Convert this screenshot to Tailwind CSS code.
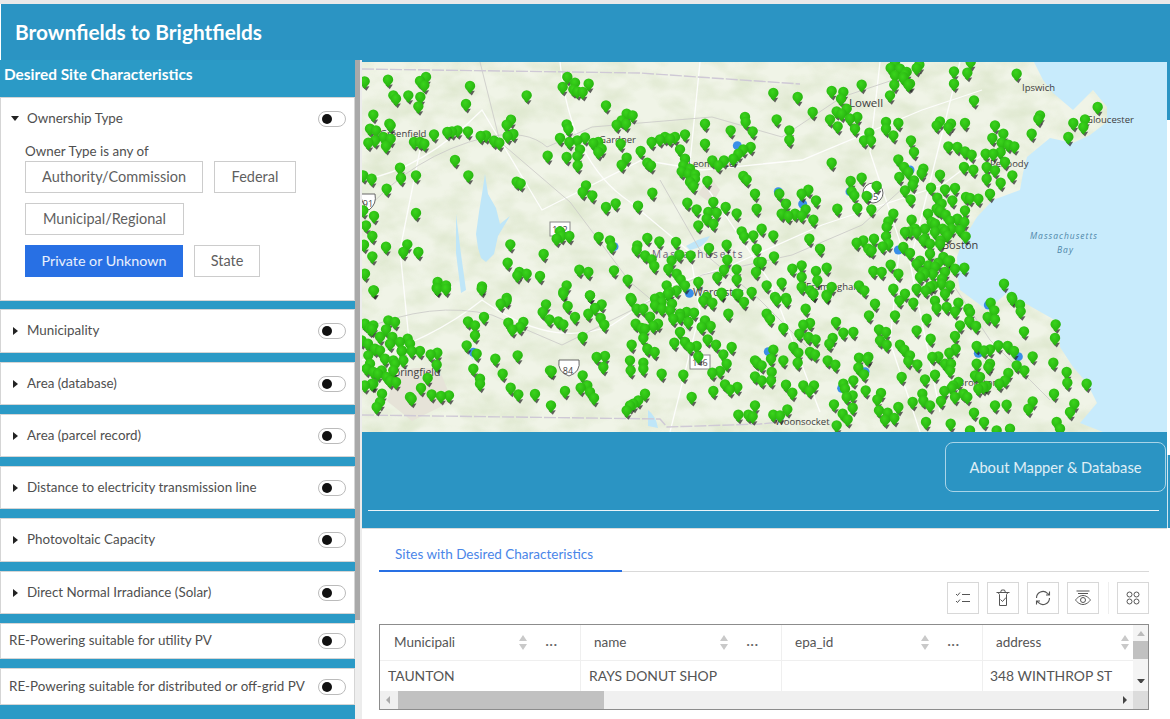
<!doctype html>
<html lang="en">
  <head>
    <meta charset="UTF-8" />
    <title>Brownfields to Brightfields</title>
    <script src="https://cdn.jsdelivr.net/npm/@tailwindcss/browser@4"></script>
  </head>
  <body class="w-[1170px] h-[719px] overflow-hidden bg-white font-['Lato','Liberation_Sans',sans-serif] text-[#4f4f4f]">
    <div class="h-[4px] bg-[#e9e9e9]"></div>

    <!-- header -->
    <header class="h-[56px] ml-[1px] bg-[#2b94c3] flex items-center pl-[14px]">
      <h1 class="text-white text-[20.8px] font-bold">Brownfields to Brightfields</h1>
    </header>

    <div class="flex h-[659px]">
      <!-- filters -->
      <aside class="w-[355px] shrink-0 bg-[#2b9ac6] flex flex-col">
        <h2 class="h-[37px] pl-[4px] pt-[3px] text-white text-[15.4px] font-bold">Desired Site Characteristics</h2>
        <section class="h-[204px] bg-white border border-[#d5d5d5] pl-[10px] pr-[8px]">
          <div class="flex items-center h-[41px]">
            <svg class="w-[8px] h-[5px] mr-[8px]" viewBox="0 0 8 5"><path d="M0 0h8L4 5z" fill="#222" /></svg>
            <span class="text-[13.4px] flex-1 pb-[1px]">Ownership Type</span>
            <div class="w-[28px] h-[16px] rounded-full border border-[#bbb] bg-white flex items-center pl-[3px]"><div class="w-[10px] h-[10px] rounded-full bg-[#111]"></div></div>
          </div>
          <p class="ml-[14px] mt-[5px] h-[15px] text-[13.4px] leading-[15px]">Owner Type is any of</p>
          <div class="ml-[14px] mt-[2px] flex flex-col gap-[10px]">
            <div class="flex gap-[11px]">
              <button class="w-[178px] h-[32px] border border-[#ccc] text-[14.5px] text-[#5f5f5f]">Authority/Commission</button>
              <button class="w-[82px] h-[32px] border border-[#ccc] text-[14.5px] text-[#5f5f5f]">Federal</button>
            </div>
            <div class="flex">
              <button class="w-[159px] h-[32px] border border-[#ccc] text-[14.5px] text-[#5f5f5f]">Municipal/Regional</button>
            </div>
            <div class="flex gap-[11px]">
              <button class="w-[158px] h-[32px] bg-[#2870e4] text-[14.3px] text-white/90">Private or Unknown</button>
              <button class="w-[66px] h-[32px] border border-[#ccc] text-[14.5px] text-[#5f5f5f]">State</button>
            </div>
          </div>
        </section>

        <div class="flex flex-col gap-[9px] mt-[8px]">
          <div class="h-[44px] bg-white border border-[#d5d5d5] flex items-center pl-[12px] pr-[8px]">
            <svg class="w-[5px] h-[8px] mr-[9px]" viewBox="0 0 5 8"><path d="M0 0l5 4-5 4z" fill="#222" /></svg>
            <span class="text-[13.4px] flex-1 pb-[1px]">Municipality</span>
            <div class="w-[28px] h-[16px] rounded-full border border-[#bbb] bg-white flex items-center pl-[3px]"><div class="w-[10px] h-[10px] rounded-full bg-[#111]"></div></div>
          </div>
          <div class="h-[43px] bg-white border border-[#d5d5d5] flex items-center pl-[12px] pr-[8px]">
            <svg class="w-[5px] h-[8px] mr-[9px]" viewBox="0 0 5 8"><path d="M0 0l5 4-5 4z" fill="#222" /></svg>
            <span class="text-[13.4px] flex-1 pb-[1px]">Area (database)</span>
            <div class="w-[28px] h-[16px] rounded-full border border-[#bbb] bg-white flex items-center pl-[3px]"><div class="w-[10px] h-[10px] rounded-full bg-[#111]"></div></div>
          </div>
          <div class="h-[43px] bg-white border border-[#d5d5d5] flex items-center pl-[12px] pr-[8px]">
            <svg class="w-[5px] h-[8px] mr-[9px]" viewBox="0 0 5 8"><path d="M0 0l5 4-5 4z" fill="#222" /></svg>
            <span class="text-[13.4px] flex-1 pb-[1px]">Area (parcel record)</span>
            <div class="w-[28px] h-[16px] rounded-full border border-[#bbb] bg-white flex items-center pl-[3px]"><div class="w-[10px] h-[10px] rounded-full bg-[#111]"></div></div>
          </div>
          <div class="h-[43px] bg-white border border-[#d5d5d5] flex items-center pl-[12px] pr-[8px]">
            <svg class="w-[5px] h-[8px] mr-[9px]" viewBox="0 0 5 8"><path d="M0 0l5 4-5 4z" fill="#222" /></svg>
            <span class="text-[13.4px] flex-1 pb-[1px]">Distance to electricity transmission line</span>
            <div class="w-[28px] h-[16px] rounded-full border border-[#bbb] bg-white flex items-center pl-[3px]"><div class="w-[10px] h-[10px] rounded-full bg-[#111]"></div></div>
          </div>
          <div class="h-[44px] bg-white border border-[#d5d5d5] flex items-center pl-[12px] pr-[8px]">
            <svg class="w-[5px] h-[8px] mr-[9px]" viewBox="0 0 5 8"><path d="M0 0l5 4-5 4z" fill="#222" /></svg>
            <span class="text-[13.4px] flex-1 pb-[1px]">Photovoltaic Capacity</span>
            <div class="w-[28px] h-[16px] rounded-full border border-[#bbb] bg-white flex items-center pl-[3px]"><div class="w-[10px] h-[10px] rounded-full bg-[#111]"></div></div>
          </div>
          <div class="h-[43px] bg-white border border-[#d5d5d5] flex items-center pl-[12px] pr-[8px]">
            <svg class="w-[5px] h-[8px] mr-[9px]" viewBox="0 0 5 8"><path d="M0 0l5 4-5 4z" fill="#222" /></svg>
            <span class="text-[13.4px] flex-1 pb-[1px]">Direct Normal Irradiance (Solar)</span>
            <div class="w-[28px] h-[16px] rounded-full border border-[#bbb] bg-white flex items-center pl-[3px]"><div class="w-[10px] h-[10px] rounded-full bg-[#111]"></div></div>
          </div>
          <div class="h-[36px] bg-white border border-[#d5d5d5] flex items-center pl-[8px] pr-[8px]">
            <span class="text-[13.4px] flex-1 pb-[1px]">RE-Powering suitable for utility PV</span>
            <div class="w-[28px] h-[16px] rounded-full border border-[#bbb] bg-white flex items-center pl-[3px]"><div class="w-[10px] h-[10px] rounded-full bg-[#111]"></div></div>
          </div>
          <div class="h-[37px] bg-white border border-[#d5d5d5] flex items-center pl-[8px] pr-[8px]">
            <span class="text-[13.4px] flex-1 pb-[1px]">RE-Powering suitable for distributed or off-grid PV</span>
            <div class="w-[28px] h-[16px] rounded-full border border-[#bbb] bg-white flex items-center pl-[3px]"><div class="w-[10px] h-[10px] rounded-full bg-[#111]"></div></div>
          </div>
        </div>
      </aside>

      <!-- sidebar scrollbar -->
      <div class="w-[5px] shrink-0 bg-[#eeeeee]"><div class="h-[560px] bg-[#a9a9a9]"></div></div>
      <div class="w-[2px] shrink-0 bg-[#ececec]"></div>

      <main class="w-[805px] shrink-0 flex flex-col">
        <div class="h-[2px] bg-[#2b94c3]"></div>
        <!-- map -->
        <svg id="map" class="block w-[805px] h-[370px]" viewBox="362 62 805 370">
          <defs>
            <radialGradient id="head" cx="0.42" cy="0.3" r="0.75">
              <stop offset="0" stop-color="#3ad41c" />
              <stop offset="1" stop-color="#22ab0c" />
            </radialGradient>
            <filter id="hills" x="0" y="0" width="1" height="1">
              <feTurbulence type="fractalNoise" baseFrequency="0.03 0.05" numOctaves="3" seed="7" />
              <feColorMatrix values="0 0 0 0 0.70  0 0 0 0 0.78  0 0 0 0 0.58  2.2 0 0 0 -0.8" />
            </filter>
            <g id="pin">
              <path d="M-2.500 4 1.800 8.200 4.800 3.500z" fill="#222" opacity="0.7" />
              <path d="M-5.200-1.300a5.200 5.200 0 0 1 10.400 0c0 3-3.200 4.700-5.200 7.700-2-3-5.200-4.700-5.200-7.700z" fill="url(#head)" />
            </g>
          </defs>
          <rect x="362" y="62" width="805" height="370" fill="#f0f4e7" />
          <rect x="362" y="62" width="805" height="370" filter="url(#hills)" opacity="0.7" />
          <path d="M395 375q20-12 45-4l12 30-40 20-25-20zM710 176l10 14-8 14-14-10z" fill="#e6e3d8" />
          <!-- water -->
          <path d="M1033 60 1043 80 1053 93 1073 110 1093 90 1107 107 1107 122 1090 135 1073 143 1050 138 1027 157 1023 173 1020 190 993 200 977 217 963 240 957 257 957 273 960 290 987 310 1007 293 1037 310 1060 323 1060 347 1073 367 1087 383 1097 403 1080 423 1103 432 1167 432 1167 60z" fill="#c8ebfc" />
          <g fill="#bfe6f8">
            <path d="M485 174l3 20 8 14 4 16 10-8-12 20-4 18-8 8-5-4-3-10-2-14 3-22 3-18z" />
            <path d="M456 214l5 40 5 36-5 3-5-40z" />
            <path d="M686 246q14-8 24-10-6 12-20 14zM648 410q8 6 10 18l-10-2zM470 350l6 6-4 4z" />
          </g>
          <!-- roads -->
          <g fill="none" stroke="#ffffff" stroke-width="1.300" opacity="0.9">
            <path d="M362 180q60-10 120-70l60 100 100-50 60 10 100-10 120-50 60-20" />
            <path d="M362 360q70-20 120-60 70 50 130 25l60-40 60-20 90-40 120-40 40-30" />
            <path d="M560 62q10 100 70 140l60 50 10 60-30 120" />
            <path d="M700 62l-10 100 40 60 40 60 50 130" />
            <path d="M880 62l-10 90 30 90-10 100 30 90" />
            <path d="M420 150l-20 100 10 100" />
            <path d="M960 62l-30 120-20 80 30 150" />
          </g>
          <g fill="none" stroke="#cdcdc9" stroke-width="0.900">
            <path d="M362 215q50-60 125-78 40-8 60 10l45-20 120-10 70 20 60-40 60-20" />
            <path d="M362 330q70-30 130-15l70 30 40-20 100-50 90-20 70-30 50-45" />
            <path d="M930 250l60 90 60 60" />
            <path d="M480 62l20 80 70 60 60 80 60 50" />
            <path d="M660 180l40 70 60 50 60 60" />
          </g>
          <g fill="none" stroke="#cfc9d6" stroke-width="1.400" stroke-dasharray="12 2">
            <path d="M362 69 640 73 800 84" />
            <path d="M362 415 660 419 667 427 760 424 780 422" />
          </g>
          <!-- shields -->
          <g font-family="'Open Sans',sans-serif" font-size="9" fill="#444" text-anchor="middle">
            <path d="M361 194h14q2 10-6 16q-8-6-8-16z" fill="#fff" stroke="#666" /><text x="368" y="207">91</text>
            <rect x="550" y="222" width="20" height="14" fill="#fff" stroke="#888" /><text x="560" y="233">122</text>
            <circle cx="873" cy="193" r="10" fill="#fff" stroke="#666" /><text x="873" y="200">95</text>
            <path d="M559 360h20q2 12-10 16q-12-4-10-16z" fill="#fff" stroke="#666" /><text x="568" y="374">84</text>
            <rect x="690" y="355" width="20" height="14" fill="#fff" stroke="#888" /><text x="700" y="366">146</text>
          </g>
          <!-- place labels -->
          <g font-family="'Open Sans',sans-serif" fill="#3d3d3d">
            <text x="380" y="137" font-size="9.500">Greenfield</text>
            <text x="599" y="143" font-size="9.500">Gardner</text>
            <text x="688" y="167" font-size="9.500">Leominster</text>
            <text x="849" y="107" font-size="11.500">Lowell</text>
            <text x="1022" y="91" font-size="9.500">Ipswich</text>
            <text x="1086" y="123" font-size="9.500">Gloucester</text>
            <text x="990" y="167" font-size="9.500">Peabody</text>
            <text x="942" y="249" font-size="11">Boston</text>
            <text x="806" y="290" font-size="9.500">Framingham</text>
            <text x="693" y="296" font-size="10.500">Worcester</text>
            <text x="388" y="376" font-size="10.500">Springfield</text>
            <text x="775" y="425" font-size="9.500">Woonsocket</text>
            <text x="958" y="386" font-size="9.500">Brockton</text>
            <text x="652" y="258" font-size="10" letter-spacing="1.800" fill="#6b5d78">Massachusetts</text>
            <text x="1030" y="239" font-size="8.500" letter-spacing="1" font-style="italic" fill="#4d86a8">Massachusetts</text>
            <text x="1057" y="253" font-size="8.500" letter-spacing="1" font-style="italic" fill="#4d86a8">Bay</text>
          </g>
          <g id="pins"></g>
        </svg>

        <!-- about band -->
        <div class="h-[97px] bg-[#2b94c3] pt-[10px] pl-[583px] border-b border-[#dcdcdc]">
          <button class="w-[221px] h-[50px] rounded-[8px] border border-[#a8d4e8] text-[14.7px] text-white/85">About Mapper &amp; Database</button>
          <div class="mt-[18px] -ml-[577px] mr-[8px] h-[1px] bg-white/90"></div>
        </div>

        <!-- results -->
        <div class="flex-1 bg-white pl-[17px] pr-[18px]">
          <div class="h-[43px] border-b border-[#d9d9d9] flex">
            <div class="w-[243px] h-[43px] border-b-2 border-[#2870e4] text-[#4a86e8] text-[13.5px] pl-[16px] pt-[15px]">Sites with Desired Characteristics</div>
          </div>
          <div class="h-[52px] flex items-center justify-end">
            <div class="flex gap-[8px] items-center">
              <button class="w-[32px] h-[32px] border border-[#d8d8d8] flex items-center justify-center">
                <svg class="w-[16px] h-[16px]" viewBox="0 0 16 16" fill="none" stroke="#555"><path d="M1 4l1.500 1.500L5 2.500M1 11l1.500 1.500L5 9.500M7 4.500h8M7 11.500h8" /></svg>
              </button>
              <button class="w-[32px] h-[32px] border border-[#d8d8d8] flex items-center justify-center">
                <svg class="w-[16px] h-[18px]" viewBox="0 0 16 18" fill="none" stroke="#555"><path d="M1.500 3.500h13M5.500 3.500l1-2.500h3l1 2.500M3 3.500l1.500 2v11h7v-11l1.500-2M5.500 10.500l2 2 3.500-4" /></svg>
              </button>
              <button class="w-[32px] h-[32px] border border-[#d8d8d8] flex items-center justify-center">
                <svg class="w-[16px] h-[16px]" viewBox="0 0 16 16" fill="none" stroke="#555" stroke-width="1.100"><path d="M1.500 8a6.500 6.500 0 0 1 11-4.700L14.500 5M14.500 8a6.500 6.500 0 0 1-11 4.700L1.500 11M14.500 1.500V5H11M1.500 14.500V11H5" /></svg>
              </button>
              <button class="w-[32px] h-[32px] border border-[#d8d8d8] flex items-center justify-center">
                <svg class="w-[16px] h-[16px]" viewBox="0 0 16 16" fill="none" stroke="#555"><path d="M1.500 1h13M3 3.500h10M.5 10s3-4.500 7.500-4.500 7.500 4.500 7.500 4.500-3 4.500-7.500 4.500S.5 10 .5 10z" /><circle cx="8" cy="10" r="2.500" /></svg>
              </button>
              <div class="w-[1px] h-[32px] ml-[1px] bg-[#eeeeee]"></div>
              <button class="w-[32px] h-[32px] border border-[#d8d8d8] flex items-center justify-center">
                <svg class="w-[14px] h-[14px]" viewBox="0 0 14 14" fill="none" stroke="#555"><circle cx="3.500" cy="3.500" r="2.500" /><circle cx="10.500" cy="3.500" r="2.500" /><circle cx="3.500" cy="10.500" r="2.500" /><circle cx="10.500" cy="10.500" r="2.500" /></svg>
              </button>
            </div>
          </div>

          <!-- table -->
          <div class="h-[86px] border border-[#8c8c8c] flex">
            <div class="w-[753px] shrink-0 flex flex-col">
              <div class="h-[36px] grid grid-cols-[201px_201px_201px_150px] border-b border-[#efefef] text-[13.5px] text-[#555]">
                <div class="flex items-center pl-[14px] pr-[22px] border-r border-[#efefef]">
                  <span class="flex-1">Municipali</span>
                  <svg class="w-[8px] h-[15px] mr-[18px]" viewBox="0 0 8 15"><path d="M4 0l4 6H0zM0 9h8l-4 6z" fill="#c9c9c9" /></svg>
                  <span class="tracking-[1px] text-[#666] font-bold leading-[8px] pb-[4px]">...</span>
                </div>
                <div class="flex items-center pl-[13px] pr-[22px] border-r border-[#efefef]">
                  <span class="flex-1">name</span>
                  <svg class="w-[8px] h-[15px] mr-[18px]" viewBox="0 0 8 15"><path d="M4 0l4 6H0zM0 9h8l-4 6z" fill="#c9c9c9" /></svg>
                  <span class="tracking-[1px] text-[#666] font-bold leading-[8px] pb-[4px]">...</span>
                </div>
                <div class="flex items-center pl-[13px] pr-[22px] border-r border-[#efefef]">
                  <span class="flex-1">epa_id</span>
                  <svg class="w-[8px] h-[15px] mr-[18px]" viewBox="0 0 8 15"><path d="M4 0l4 6H0zM0 9h8l-4 6z" fill="#c9c9c9" /></svg>
                  <span class="tracking-[1px] text-[#666] font-bold leading-[8px] pb-[4px]">...</span>
                </div>
                <div class="flex items-center pl-[13px] pr-[4px]">
                  <span class="flex-1">address</span>
                  <svg class="w-[8px] h-[15px]" viewBox="0 0 8 15"><path d="M4 0l4 6H0zM0 9h8l-4 6z" fill="#c9c9c9" /></svg>
                </div>
              </div>
              <div class="h-[30px] grid grid-cols-[201px_201px_201px_150px] text-[13.9px] text-[#555]">
                <div class="flex items-center pl-[8px] border-r border-[#efefef]">TAUNTON</div>
                <div class="flex items-center pl-[8px] border-r border-[#efefef]">RAYS DONUT SHOP</div>
                <div class="border-r border-[#efefef]"></div>
                <div class="flex items-center pl-[7px]">348 WINTHROP ST</div>
              </div>
              <div class="h-[18px] bg-[#f0f0f0] flex items-center">
                <svg class="w-[18px] h-[8px]" viewBox="0 0 18 8"><path d="M10 0v8L6 4z" fill="#aaa" /></svg>
                <div class="w-[206px] h-[18px] bg-[#c1c1c1]"></div>
                <div class="flex-1"></div>
                <svg class="w-[18px] h-[8px]" viewBox="0 0 18 8"><path d="M8 0v8l4-4z" fill="#444" /></svg>
              </div>
            </div>
            <div class="flex-1 bg-[#f4f4f4] flex flex-col items-center">
              <svg class="w-[8px] h-[5px] mt-[6px]" viewBox="0 0 8 5"><path d="M4 0l4 5H0z" fill="#bbb" /></svg>
              <div class="w-full h-[18px] mt-[5px] bg-[#c1c1c1]"></div>
              <svg class="w-[8px] h-[5px] mt-[20px]" viewBox="0 0 8 5"><path d="M0 0h8L4 5z" fill="#444" /></svg>
              <div class="w-full h-[18px] mt-[8px] bg-[#dcdcdc]"></div>
            </div>
          </div>
        </div>
      </main>

      <!-- right edge of the page -->
      <div class="w-[3px] shrink-0 flex flex-col">
        <div class="h-[60px] bg-[#2b94c3]"></div>
        <div class="h-[335px] bg-white"></div>
        <div class="h-[73px] bg-[#2b94c3] border-l border-[#cfe6f0]"></div>
      </div>
    </div>

    <script>
      // pin positions, read off the reference crop by crop: [offsetX, offsetY, "x,y ..." in 3x crop units]
      const greens = [
        [360, 60, "14,68 84,63 180,67 198,55 193,80 330,82 100,110 108,120 145,110 181,115 175,143 318,136 500,110 622,55 645,72 608,85 640,92 652,98 668,100 686,75 738,140 40,168 88,195 92,200 30,210 48,215 222,227 262,220 276,218 293,215 324,218 362,232 378,230 402,246 418,252 443,232 460,226 440,198 453,183 162,250 180,250 193,255 25,252 45,245 78,262 70,235 92,240 600,238 628,250 652,245 675,236 700,253 715,250 620,197 625,210 770,198 785,185 800,165 818,170 798,195 782,255 842,277 875,250 900,242 915,235 930,240 945,235 960,272 975,227 1035,195 1035,255 1112,215 1155,175 1157,190 1178,218 1172,265 1150,272 1135,285 1120,300 563,291 620,295 652,292 660,272 653,320 715,280 725,270 800,297 785,318 862,312 873,320 285,304 120,327 123,358 168,350 325,350 10,350 35,360 80,390 470,369 482,374 678,380 668,400 697,410 738,445 767,434 834,441 877,402 982,432 1010,452 1060,430 1097,445 1130,464 1185,405 1190,450 970,320 985,345 1005,347 965,338 990,370 1000,382 1042,367 1057,305 1075,320 1092,305 1150,352 1160,362 168,463 42,472 10,455 18,500 37,532 78,564 142,557 130,580 175,580 37,593 12,558 451,557 551,586 443,612 600,518 590,540 605,532 628,532 716,535 750,545 755,563 832,560 830,572 862,538 898,548 948,550 855,590 875,602 883,622 958,588 992,590 1047,568 1100,558 1102,603 1092,633 1130,632 1130,662 1072,655 1015,670 1045,460 1070,462 1040,480 1060,495 1015,500 1145,518 1152,533 1180,530 1190,570 1195,610 1188,640 658,633 685,640 762,635 803,663 500,645 472,650 478,640 540,652 366,683 233,670 258,680 230,688 42,695 15,645 620,680 610,700 690,710 440,718 812,718 935,605 925,630 950,645 962,662 975,680 920,680 930,700 900,715 1085,702 1130,705 1175,700 1040,715"],
        [760, 60, "392,28 405,10 405,50 430,55 440,40 470,28 478,18 403,78 445,78 430,58 632,10 582,38 622,42 582,75 770,45 305,78 40,103 113,115 215,97 250,100 243,120 390,110 642,125 158,160 50,182 230,158 245,165 260,150 210,182 270,180 292,175 233,203 285,210 88,215 88,243 378,190 415,193 378,210 400,230 328,222 312,245 333,245 453,245 462,280 530,200 540,188 565,205 573,195 615,193 705,200 730,225 697,238 725,252 745,258 763,263 565,263 592,265 615,278 635,288 677,285 700,285 722,280 815,225 840,170 835,180 940,193 970,205 975,182 1013,145 925,235 215,312 415,302 432,325 445,340 490,330 485,343 418,355 540,348 458,378 462,365 612,325 640,333 680,325 705,335 735,310 757,350 680,360 722,372 690,405 272,367 305,357 275,398 283,410 350,382 320,412 58,405 125,405 145,393 168,425 78,435 232,450 292,448 334,452 400,465 435,395 452,422 513,387 555,392 585,388 532,417 577,425 545,435 630,418 655,420 618,415 530,450 557,468 615,455 592,480 613,490 65,465 85,472 105,465 125,470 137,452 160,483 5,510 40,530 148,540 180,570 290,552 310,545 342,540 380,505 385,488 455,483 435,520 450,518 470,520 495,510 515,490 525,520 548,510 575,510 600,513 562,530 617,533 490,543 510,555 542,545 378,533 385,555 368,563 325,570 335,575 430,565 450,583 42,593 5,610 97,630 125,620 168,637 200,627 125,655 172,665 340,637 365,640 392,618 415,645 470,615 505,620 535,612 570,605 550,595 488,640 480,655 518,645 555,640 613,627 65,672 20,680 125,685 150,695 215,685 297,680 313,695 400,690 435,705 470,690 497,695 520,680 545,675 570,680 732,675 755,715 45,715 78,718 160,705 200,708"],
        [360, 290, "40,5 232,0 258,0 365,0 610,15 690,20 422,45 440,35 558,47 623,52 548,70 568,92 595,98 610,107 645,85 685,75 705,58 725,47 722,88 733,108 815,33 830,60 850,60 885,50 905,40 925,15 950,5 930,65 940,90 960,85 980,70 1002,72 985,100 1035,95 1025,115 1052,112 1030,35 1057,42 1105,75 1085,15 1135,15 1152,40 960,130 943,162 975,160 990,175 1010,172 1043,152 1068,168 1115,175 1090,197 1100,225 1080,247 1057,252 1015,203 1185,215 1185,263 1190,220 827,105 845,118 880,112 850,148 815,168 862,180 884,190 810,215 850,222 812,245 850,240 905,255 970,258 995,325 1060,307 1095,287 1110,302 1132,295 1185,350 1135,378 1165,378 1178,383 855,315 835,335 820,345 810,350 800,365 735,202 710,205 730,235 668,145 668,260 615,307 662,297 682,290 690,310 702,328 573,350 525,316 475,317 452,297 428,255 473,200 406,210 340,240 360,270 360,285 350,195 320,170 345,140 345,110 372,85 324,98 445,102 457,122 490,100 480,115 570,245 575,247 203,268 230,228 232,192 212,197 180,187 155,187 143,150 120,160 97,145 125,187 105,100 85,95 78,122 40,110 30,120 15,105 5,155 60,185 25,200 100,215 130,215 100,245 65,245 40,250 20,240 80,265 108,280 40,285 15,290 183,298 215,317 243,322 267,320 150,325 155,330 60,340 50,355"],
        [760, 290, "50,32 80,35 137,60 20,75 30,90 70,118 130,108 150,103 118,135 145,145 167,152 228,100 250,132 280,130 327,80 345,45 200,22 160,15 418,35 460,42 405,80 500,90 470,125 530,58 560,55 585,68 595,42 625,60 630,70 628,97 600,110 648,112 585,142 512,150 692,42 703,65 683,85 705,92 757,30 780,48 782,68 792,128 887,107 885,148 100,175 115,192 150,190 165,197 40,183 33,210 70,215 5,230 35,250 5,275 33,275 113,222 203,215 226,228 218,148 208,165 357,122 378,130 360,155 380,168 420,168 433,183 450,200 445,217 472,227 297,207 325,205 322,210 295,237 312,257 425,265 495,272 525,258 517,205 535,203 568,192 587,180 555,225 573,225 570,245 650,172 672,185 690,182 715,170 743,172 762,187 650,225 690,225 685,235 770,230 793,245 818,203 880,222 920,250 922,282 980,285 882,315 745,253 735,275 718,285 645,260 660,265 655,300 680,292 670,295 580,290 595,280 575,297 553,307 610,315 622,325 585,325 543,337 510,350 490,335 487,315 458,340 415,355 352,332 363,313 317,305 280,275 250,285 255,300 260,325 278,320 222,347 278,357 357,365 383,372 403,388 375,393 248,375 263,392 230,410 82,362 40,378 60,380 97,312 130,290 148,305 162,290 78,288 498,400 572,405 642,372 672,400 705,350 740,348 805,360 818,338 930,370 943,345 890,400 900,420 630,425 710,425 750,420"],
        // dense clusters (Boston, Springfield, Worcester, Leominster, Lawrence), in page pixels x3
        [0, 0, "2805,675 2835,696 2775,720 2820,735 2790,765 2844,786 2805,804 2775,825 2826,840 2790,864 2835,885 2805,906 2760,786 2865,810 2745,690 2850,666 2784,645 2820,636 1116,990 1140,1014 1170,1035 1125,1050 1155,1080 1110,1095 1185,1095 1134,1125 1170,1146 1206,1056 1104,1035 1146,1185 1116,1155 1230,1035 1965,900 1986,930 1950,954 2004,885 1974,975 2016,915 1935,990 2040,945 2070,510 2085,540 2055,480 2715,225 2730,255 2700,210"],
      ];
      const blues = [
        [360, 60, "1132,257 762,560 988,700"],
        [760, 60, "55,395 270,395 128,432 415,570 450,330"],
        [760, 290, "25,185 685,45 655,190 715,165 775,200 315,245 245,295"],
        [360, 290, "340,187"],
      ];
      const expand = (groups) =>
        groups.flatMap(([ox, oy, list]) =>
          list.split(" ").map((p) => {
            const [x, y] = p.split(",").map(Number);
            return [ox + x / 3, oy + y / 3];
          })
        );

      let markup = "";
      for (const [x, y] of expand(blues)) {
        markup += `<circle cx="${x}" cy="${y}" r="4.500" fill="#3a8fe8" />`;
      }
      const pins = expand(greens).sort((a, b) => a[1] - b[1]);
      for (const [x, y] of pins) {
        markup += `<use href="#pin" x="${x}" y="${y}" />`;
      }
      document.getElementById("pins").innerHTML = markup;
    </script>
  </body>
</html>
